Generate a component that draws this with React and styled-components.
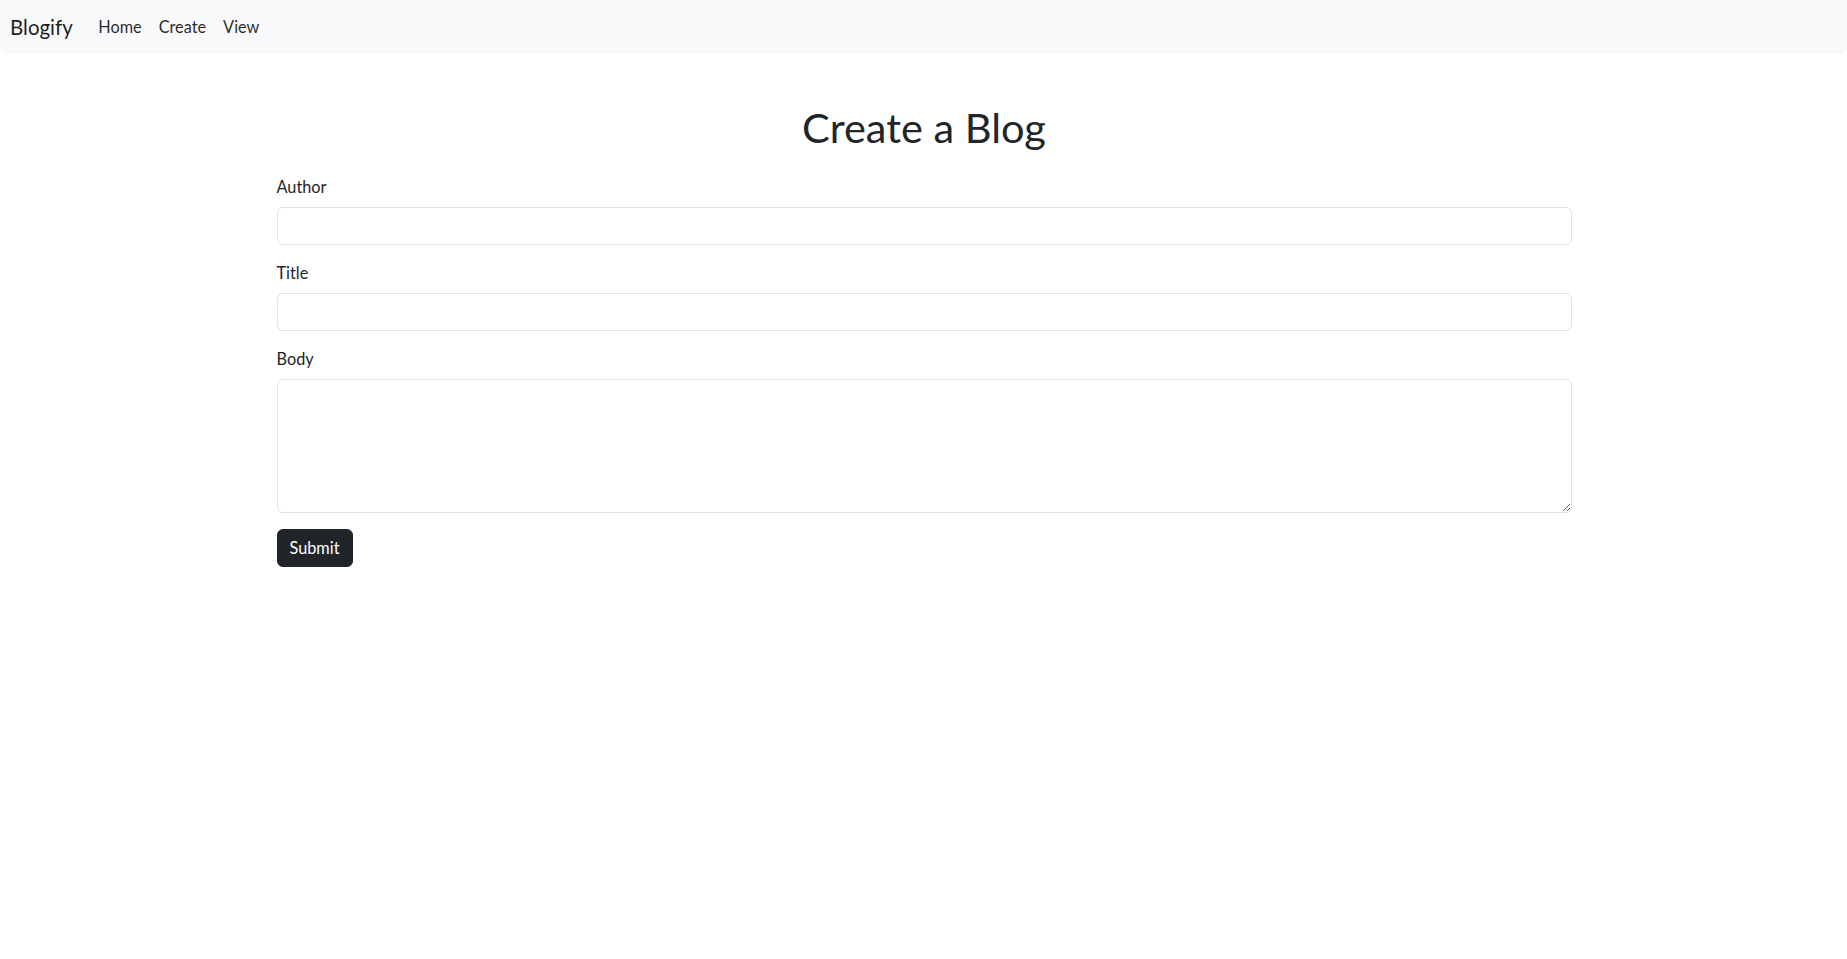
import React from "react";
import styled, { createGlobalStyle } from "styled-components";

const GlobalStyle = createGlobalStyle`
    *, *::before, *::after {
        box-sizing: border-box;
    }
    body {
        margin: 0;
        font-family: "Lato", "Open Sans", sans-serif;
        font-size: 16px;
        line-height: 1.5;
        color: #212529;
        background: #fff;
    }
`;

const Navbar = styled.nav`
    height: 54px;
    background: #f8f9fa;
    display: flex;
    align-items: center;
    padding: 0 10px;
    border-bottom-left-radius: 6px;
    border-bottom-right-radius: 6px;
`;

const Brand = styled.a`
    font-size: 20.5px;
    color: rgba(0, 0, 0, 0.9);
    text-decoration: none;
    margin-right: 17px;
    line-height: 30px;
`;

const NavLinks = styled.div`
    display: flex;
`;

const NavLink = styled.a`
    color: rgba(0, 0, 0, 0.85);
    text-decoration: none;
    padding: 8px 8.5px;
    font-size: 16.3px;
    line-height: 24px;
`;

const Container = styled.main`
    max-width: 1320px;
    margin: 0 auto;
    padding: 49px 12px 0 13px;
`;

const Heading = styled.h1`
    text-align: center;
    font-size: 41.5px;
    font-weight: 400;
    line-height: 48px;
    margin: 0 0 24px;
`;

const Group = styled.div`
    margin-bottom: 16px;
`;

const Label = styled.label`
    display: block;
    margin-bottom: 8px;
    font-size: 16.3px;
    line-height: 24px;
`;

const Input = styled.input`
    display: block;
    width: 100%;
    height: 38px;
    padding: 6px 12px;
    font: inherit;
    color: #212529;
    border: 1px solid #dee2e6;
    border-radius: 6px;
    background: #fff;
    outline: none;
`;

const TextArea = styled.textarea`
    display: block;
    width: 100%;
    height: 134px;
    padding: 6px 12px;
    font: inherit;
    color: #212529;
    border: 1px solid #dee2e6;
    border-radius: 6px;
    background: #fff;
    outline: none;
    resize: vertical;
`;

const Button = styled.button`
    height: 38px;
    padding: 6px 12px;
    font: inherit;
    font-size: 16.3px;
    color: #fff;
    background: #212529;
    border: 1px solid #212529;
    border-radius: 6px;
    cursor: pointer;
`;

export default function App() {
    return (
        <>
            <GlobalStyle />
            <Navbar>
                <Brand href="#">Blogify</Brand>
                <NavLinks>
                    <NavLink href="#">Home</NavLink>
                    <NavLink href="#">Create</NavLink>
                    <NavLink href="#">View</NavLink>
                </NavLinks>
            </Navbar>
            <Container>
                <Heading>Create a Blog</Heading>
                <form onSubmit={e => e.preventDefault()}>
                    <Group>
                        <Label htmlFor="author">Author</Label>
                        <Input id="author" type="text" />
                    </Group>
                    <Group>
                        <Label htmlFor="title">Title</Label>
                        <Input id="title" type="text" />
                    </Group>
                    <Group>
                        <Label htmlFor="body">Body</Label>
                        <TextArea id="body" rows={5} />
                    </Group>
                    <Button type="submit">Submit</Button>
                </form>
            </Container>
        </>
    );
}
